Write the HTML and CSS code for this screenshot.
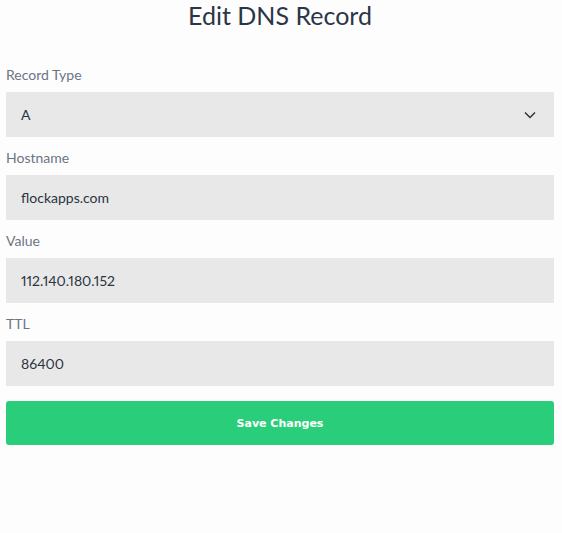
FILE: index.html
```html
<!DOCTYPE html>
<html>
<head>
<meta charset="utf-8">
<link rel="stylesheet" href="styles.css">
</head>
<body>
<div class="page">
  <h1 class="title">Edit DNS Record</h1>
  <form class="form">
    <div class="field">
      <label class="label">Record Type</label>
      <div class="input select">
        <span>A</span>
        <svg class="chev" width="12" height="8" viewBox="0 0 12 8"><path d="M1 1.5 L6 6.5 L11 1.5" fill="none" stroke="#2b3442" stroke-width="1.5"/></svg>
      </div>
    </div>
    <div class="field">
      <label class="label">Hostname</label>
      <div class="input">flockapps.com</div>
    </div>
    <div class="field">
      <label class="label">Value</label>
      <div class="input">112.140.180.152</div>
    </div>
    <div class="field">
      <label class="label">TTL</label>
      <div class="input">86400</div>
    </div>
    <button type="button" class="btn">Save Changes</button>
  </form>
</div>
</body>
</html>
```
FILE: styles.css
```css
html, body {
  margin: 0;
  padding: 0;
  background: #fdfdfd;
}
body {
  font-family: Lato, "Open Sans", sans-serif;
  color: #2b3442;
}
.page {
  padding: 0 8px 0 6px;
}
.title {
  margin: 0;
  padding-top: 1px;
  text-align: center;
  font-weight: 400;
  font-size: 25px;
  line-height: 28px;
  color: #2b3546;
}
.form {
  margin-top: 38px;
  display: flex;
  flex-direction: column;
}
.field {
  display: flex;
  flex-direction: column;
  margin-bottom: 13px;
}
.label {
  font-size: 14px;
  line-height: 16px;
  color: #6b7585;
  margin-bottom: 9px;
}
.input {
  height: 45px;
  background: #e8e8e8;
  display: flex;
  align-items: center;
  padding: 0 15px;
  font-size: 14px;
  color: #2b3442;
  box-sizing: border-box;
  font-variant-numeric: proportional-nums;
}
.select {
  justify-content: space-between;
  padding-right: 18px;
}
.btn {
  margin-top: 2px;
  height: 44px;
  border: none;
  border-radius: 3px;
  background: #2ace7a;
  color: #fff;
  font-family: "DejaVu Sans", sans-serif;
  font-weight: bold;
  font-size: 11px;
}
```
